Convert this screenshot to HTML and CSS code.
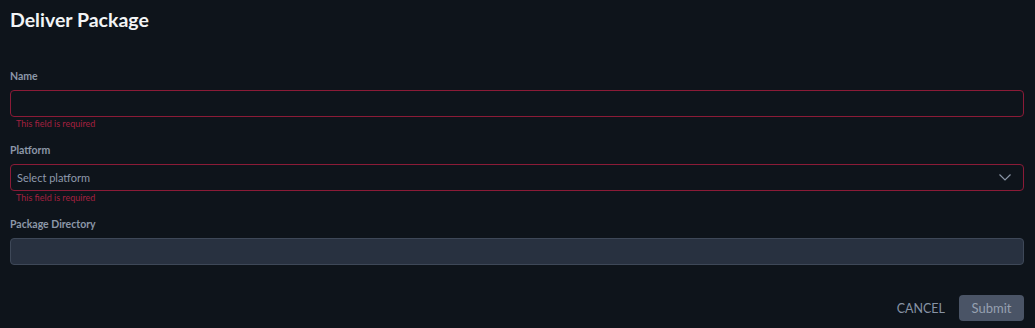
FILE: index.html
```html
<!DOCTYPE html>
<html>
<head>
<meta charset="utf-8">
<link rel="stylesheet" href="styles.css">
</head>
<body>
<div class="dialog">
  <h1 class="title">Deliver Package</h1>
  <form class="form">
    <div class="field">
      <label class="label">Name</label>
      <div class="input input-error"></div>
      <div class="error">This field is required</div>
    </div>
    <div class="field">
      <label class="label">Platform</label>
      <div class="input input-error select">
        <span class="placeholder">Select platform</span>
        <svg class="chevron" width="12" height="7" viewBox="0 0 12 7"><path d="M0.5 0.5 L6 6 L11.5 0.5" fill="none" stroke="#8a95a6" stroke-width="1.2"/></svg>
      </div>
      <div class="error">This field is required</div>
    </div>
    <div class="field">
      <label class="label">Package Directory</label>
      <div class="input input-disabled"></div>
    </div>
    <div class="actions">
      <button type="button" class="btn-cancel">CANCEL</button>
      <button type="button" class="btn-submit">Submit</button>
    </div>
  </form>
</div>
</body>
</html>
```
FILE: styles.css
```css
html, body {
  margin: 0;
  padding: 0;
  background: #0e141b;
  height: 100%;
}
body {
  font-family: "Lato", "Noto Sans", sans-serif;
  color: #e8ebef;
}
.dialog {
  padding: 6px 11px 0 10px;
}
.title {
  margin: 0;
  font-size: 19.5px;
  font-weight: 700;
  line-height: 28px;
  color: #f2f4f6;
}
.form {
  margin-top: 35px;
  display: flex;
  flex-direction: column;
}
.field {
  display: flex;
  flex-direction: column;
  height: 74px;
}
.label {
  font-size: 10.5px;
  font-weight: 700;
  color: #8c97a8;
  line-height: 14px;
  margin-bottom: 7px;
}
.input {
  box-sizing: border-box;
  height: 27px;
  border-radius: 4px;
  border: 1px solid #3c4757;
  display: flex;
  align-items: center;
  padding: 0 6px;
}
.input-error {
  border-color: #8b1b37;
  background: #0e141b;
}
.input-disabled {
  background: #283140;
  border-color: #3e4858;
}
.select {
  justify-content: space-between;
}
.placeholder {
  font-size: 11px;
  color: #8f9aab;
}
.chevron {
  margin-right: 6px;
}
.error {
  font-size: 9px;
  line-height: 12px;
  color: #a3203f;
  padding-left: 6px;
  margin-top: 1px;
}
.actions {
  display: flex;
  justify-content: flex-end;
  align-items: center;
  gap: 14px;
  margin-top: 4px;
}
.btn-cancel {
  background: none;
  border: none;
  font-family: inherit;
  font-size: 12.5px;
  color: #8793a5;
  padding: 0;
}
.btn-submit {
  width: 65px;
  height: 26px;
  border: none;
  border-radius: 4px;
  background: #4a5466;
  color: #97a1b1;
  font-family: inherit;
  font-size: 13px;
  padding: 0;
}
```
